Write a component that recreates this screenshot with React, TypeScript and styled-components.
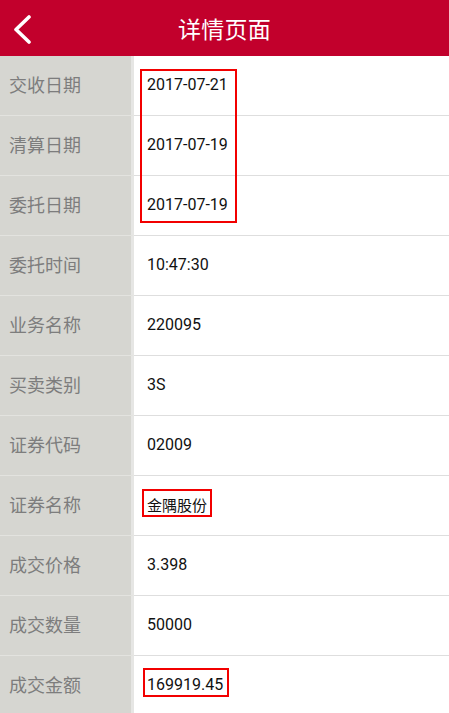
import React from 'react';
import styled, { createGlobalStyle } from 'styled-components';

interface DetailRow {
  label: string;
  value: string;
  cjk?: boolean;
}

const rows: DetailRow[] = [
  { label: '交收日期', value: '2017-07-21' },
  { label: '清算日期', value: '2017-07-19' },
  { label: '委托日期', value: '2017-07-19' },
  { label: '委托时间', value: '10:47:30' },
  { label: '业务名称', value: '220095' },
  { label: '买卖类别', value: '3S' },
  { label: '证券代码', value: '02009' },
  { label: '证券名称', value: '金隅股份', cjk: true },
  { label: '成交价格', value: '3.398' },
  { label: '成交数量', value: '50000' },
  { label: '成交金额', value: '169919.45' },
];

// red marks drawn over the list, relative to its top-left corner
const marks = [
  { left: 140, top: 13, width: 97, height: 154 },
  { left: 142, top: 433, width: 70, height: 28 },
  { left: 143, top: 612, width: 86, height: 29 },
];

const GlobalStyle = createGlobalStyle`
  html, body {
    margin: 0;
    padding: 0;
    background: #ffffff;
    font-family: Roboto, 'Noto Sans CJK SC', sans-serif;
  }
`;

const Page = styled.div`
  width: 449px;
  min-height: 713px;
  background: #ffffff;
`;

const Header = styled.div`
  position: relative;
  height: 56px;
  background: #c2002c;
  display: flex;
  align-items: center;
  justify-content: center;
`;

const BackButton = styled.div`
  position: absolute;
  left: 10px;
  top: 12px;
  width: 24px;
  height: 34px;
  display: flex;
  align-items: center;
  justify-content: center;
`;

const Title = styled.h1`
  margin: 0 0 1px 0;
  color: #ffffff;
  font-family: 'Noto Sans CJK SC', sans-serif;
  font-size: 23px;
  font-weight: 400;
  letter-spacing: 0.3px;
`;

const List = styled.div`
  position: relative;
`;

const Row = styled.div`
  display: flex;
  height: 60px;
`;

const Label = styled.div`
  width: 134px;
  flex-shrink: 0;
  box-sizing: border-box;
  padding: 0 0 3px 9px;
  display: flex;
  align-items: center;
  background: #d6d6d1;
  border-right: 3px solid #e6e6e4;
  border-bottom: 1px solid #e3e3df;
  color: #7d7d7d;
  font-family: 'Noto Sans CJK SC', sans-serif;
  font-size: 18px;
`;

const Value = styled.div<{ $cjk?: boolean }>`
  flex: 1;
  box-sizing: border-box;
  padding: 0 0 3px 13px;
  display: flex;
  align-items: center;
  border-bottom: 1px solid #dedede;
  color: #111111;
  font-family: ${(p) => (p.$cjk ? "'Noto Sans CJK SC', sans-serif" : 'Roboto, sans-serif')};
  font-size: ${(p) => (p.$cjk ? '15px' : '16px')};
`;

const Mark = styled.div`
  position: absolute;
  box-sizing: border-box;
  border: 2px solid #f20000;
  pointer-events: none;
`;

const App: React.FC = () => {
  return (
    <Page>
      <GlobalStyle />
      <Header>
        <BackButton>
          <svg width="20" height="30" viewBox="0 0 20 30">
            <polyline
              points="17,3 4,15.5 17,28"
              fill="none"
              stroke="#ffffff"
              strokeWidth="3.6"
              strokeLinecap="round"
              strokeLinejoin="round"
            />
          </svg>
        </BackButton>
        <Title>详情页面</Title>
      </Header>

      <List>
        {rows.map((row) => (
          <Row key={row.label}>
            <Label>{row.label}</Label>
            <Value $cjk={row.cjk}>{row.value}</Value>
          </Row>
        ))}
        {marks.map((m, i) => (
          <Mark
            key={i}
            style={{ left: m.left, top: m.top, width: m.width, height: m.height }}
          />
        ))}
      </List>
    </Page>
  );
};

export default App;
